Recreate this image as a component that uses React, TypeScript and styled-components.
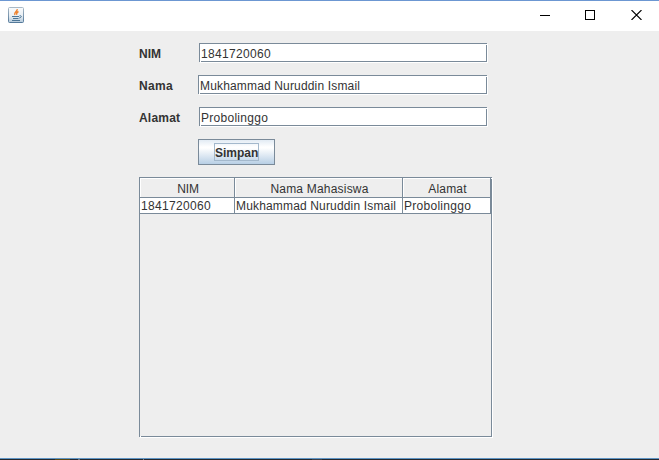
import React from "react";
import styled, { createGlobalStyle, css } from "styled-components";

const line = "#7a8a99";
const panel = "#eeeeee";

const Global = createGlobalStyle`
  * { box-sizing: border-box; }
  html, body { margin: 0; padding: 0; }
  body { background: ${panel}; overflow: hidden; }
`;

// Metal look and feel leaves single highlight pixels where the etched edges meet.
const etched = css`
  position: relative;
  border: 1px solid ${line};
  box-shadow: 1px 1px 0 #ffffff;
  &::before, &::after {
    content: "";
    position: absolute;
    width: 1px;
    height: 1px;
    background: #ffffff;
  }
  &::before { top: 0; right: -1px; }
  &::after { bottom: -1px; left: 0; }
`;

const Window = styled.div`
  display: flex;
  flex-direction: column;
  width: 659px;
  height: 460px;
  background: ${panel};
  border-top: 1px solid #6c97d2;
  color: #333333;
  font: 12px/15px "Liberation Sans", Arial, sans-serif;
`;

const TitleBar = styled.header`
  display: flex;
  justify-content: space-between;
  height: 30px;
  padding: 6px 17px 0 8px;
  background: #ffffff;
`;

const Controls = styled.div`
  display: flex;
  gap: 35px;
  padding-top: 3px;
  svg { display: block; }
  svg:last-child { margin-left: 1px; }
`;

const Content = styled.main`
  display: flex;
  flex-direction: column;
  flex: 1;
  padding: 12px 0 0 139px;
`;

const FormRow = styled.div`
  display: flex;
  height: 32px;
`;

const Label = styled.label<{ $spacing: number }>`
  width: 59px;
  padding-top: 4px;
  font-weight: bold;
  letter-spacing: ${(p) => p.$spacing}px;
`;

const Field = styled.div<{ $wide?: boolean; $spacing: number }>`
  ${etched}
  width: ${(p) => (p.$wide ? 289 : 288)}px;
  height: 19px;
  margin-left: ${(p) => (p.$wide ? 0 : 1)}px;
  padding: 3px 0 0 1px;
  background: #ffffff;
  white-space: nowrap;
  letter-spacing: ${(p) => p.$spacing}px;
`;

const Button = styled.button`
  display: flex;
  align-items: flex-start;
  justify-content: center;
  width: 77px;
  height: 26px;
  margin: 0 0 12px 59px;
  padding: 3px 0 0;
  border: 1px solid ${line};
  background: linear-gradient(#e2ebf4 0, #ffffff 7px, #ffffff 8px, #b8cfe5 100%);
  color: #333333;
  font: bold 12px/15px "Liberation Sans", Arial, sans-serif;
`;

const Focus = styled.span`
  width: 45px;
  height: 18px;
  padding-top: 2px;
  border: 1px solid #a3b8cc;
  text-align: center;
  white-space: nowrap;
`;

const ScrollPane = styled.section`
  ${etched}
  width: 353px;
  height: 260px;
`;

const TableRow = styled.div<{ $header?: boolean }>`
  display: grid;
  grid-template-columns: 95px 168px 88px;
  height: ${(p) => (p.$header ? 20 : 16)}px;
`;

const HeaderCell = styled.div<{ $spacing: number }>`
  padding: 4px 0 0 2px;
  border: solid ${line};
  border-width: 0 1px 1px 0;
  box-shadow: inset 1px 1px 0 #ffffff;
  text-align: center;
  white-space: nowrap;
  letter-spacing: ${(p) => p.$spacing}px;
`;

const Cell = styled.div<{ $spacing: number }>`
  height: 16px;
  padding: 1px 0 0 1px;
  border: solid ${line};
  border-width: 0 1px 1px 0;
  background: #ffffff;
  white-space: nowrap;
  letter-spacing: ${(p) => p.$spacing}px;
`;

const TaskEdge = styled.footer`
  height: 2px;
  border-top: 1px solid #5e94c4;
  background: linear-gradient(90deg, #24272d 0 55px, #594712 55px 70px, #24272d 70px 78px, #687078 78px 80px, #24272d 80px 143px, #777d82 143px 144px, #24272d 144px 312px, #3a3d45 312px 322px, #24272d 322px) padding-box;
`;

const JavaIcon = () => (
  <svg width="16" height="16" viewBox="0 0 16 16">
    <defs>
      <linearGradient id="tile" x2="0" y2="1">
        <stop stopColor="#f9fbfc" />
        <stop offset=".55" stopColor="#e9eff4" />
        <stop offset="1" stopColor="#b3c8da" />
      </linearGradient>
      <linearGradient id="rim" x2="0" y2="1">
        <stop stopColor="#a9b9c6" />
        <stop offset="1" stopColor="#54799a" />
      </linearGradient>
    </defs>
    <rect x=".5" y=".5" width="15" height="15" rx="1" fill="url(#tile)" stroke="url(#rim)" />
    <path d="M9.2 2.2C9.6 4.5 5.8 5 6.8 8M10.5 4.5C8.5 5.4 8.2 6.2 8.8 7.8" fill="none" stroke="#ee8330" strokeWidth="1.4" />
    <path d="M4 9.5H11M5 11.5H10.5M4 13.5H12M11.5 8.8C14.2 8.3 13.8 10.6 11.2 11" fill="none" stroke="#4c7596" strokeWidth="1" />
  </svg>
);

const fields = [
  { label: "NIM", value: "1841720060", ls: 0, vs: 0.33 },
  { label: "Nama", value: "Mukhammad Nuruddin Ismail", wide: true, ls: 0.3, vs: 0.16 },
  { label: "Alamat", value: "Probolinggo", ls: 0.2, vs: 0.28 },
];

const headers = [
  { text: "NIM", spacing: -0.1 },
  { text: "Nama Mahasiswa", spacing: 0.2 },
  { text: "Alamat", spacing: 0.2 },
];

export default function App() {
  return (
    <>
      <Global />
      <Window>
        <TitleBar>
          <JavaIcon />
          <Controls>
            <svg width="10" height="10" shapeRendering="crispEdges"><path d="M0 5.5H10" stroke="#000" /></svg>
            <svg width="10" height="10" shapeRendering="crispEdges"><rect x=".5" y=".5" width="9" height="9" fill="none" stroke="#000" /></svg>
            <svg width="11" height="10" viewBox="0 0 11 10"><path d="M.5 0L10.5 10M10.5 0L.5 10" stroke="#000" strokeWidth="1.1" /></svg>
          </Controls>
        </TitleBar>
        <Content>
          {fields.map((f) => (
            <FormRow key={f.label}>
              <Label $spacing={f.ls}>{f.label}</Label>
              <Field $wide={f.wide} $spacing={f.vs}>{f.value}</Field>
            </FormRow>
          ))}
          <Button><Focus>Simpan</Focus></Button>
          <ScrollPane>
            <TableRow $header>
              {headers.map((h) => <HeaderCell key={h.text} $spacing={h.spacing}>{h.text}</HeaderCell>)}
            </TableRow>
            <TableRow>
              {fields.map((f) => <Cell key={f.label} $spacing={f.vs}>{f.value}</Cell>)}
            </TableRow>
          </ScrollPane>
        </Content>
        <TaskEdge />
      </Window>
    </>
  );
}
